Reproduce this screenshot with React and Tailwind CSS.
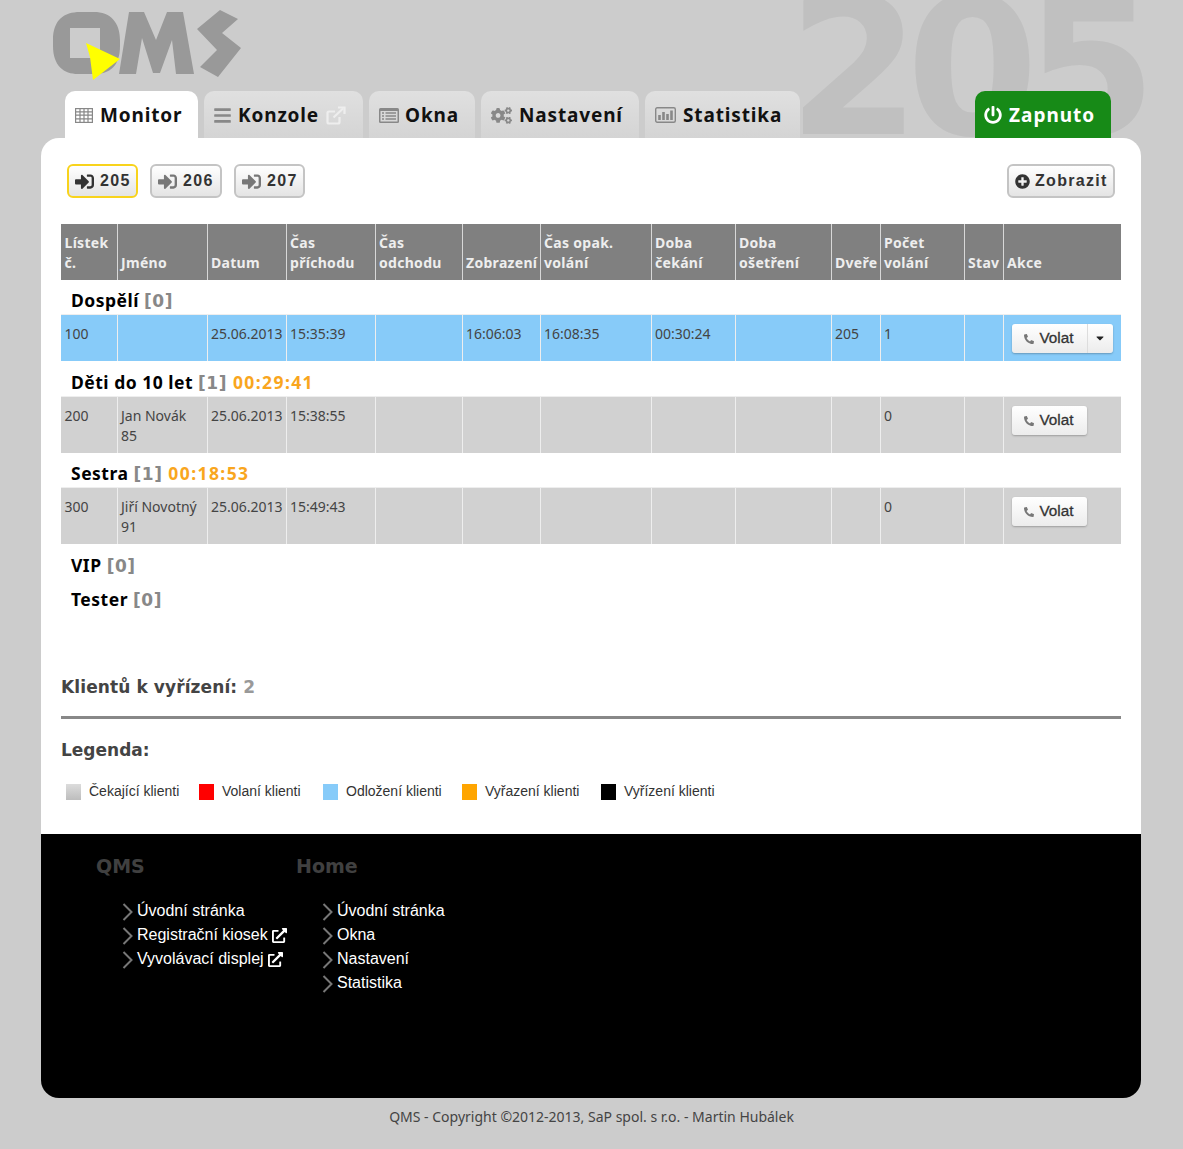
import React from "react";
import { FaBars, FaExternalLinkAlt, FaSignInAlt, FaPowerOff, FaPlusCircle, FaPhoneAlt, FaCaretDown, FaCogs } from "react-icons/fa";

const dj = "font-['DejaVu_Sans',sans-serif]";
const noto = "font-['Noto_Sans',sans-serif]";

function Logo() {
  return (
    <svg width="210" height="90" viewBox="0 0 210 90" className="absolute left-[40px] top-0">
      <path fillRule="evenodd" fill="#999" d="M13 40 C13 20 24 12 40 12 H54 C70 12 80 22 80 40 V46 C80 66 70 74 54 74 H38 C24 74 13 66 13 46 Z M30 28 V58 H60 V28 Z" />
      <polygon fill="#999" points="79,74 89,12 104,12 116,40 127,12 143,12 154,74 136,74 132,40 120,73 113,73 102,38 96,74" />
      <polygon fill="#999" points="180,10 198,19 182,33 201,48 178,77 160,67 177,50 157,29" />
      <polygon fill="#ffff00" points="46,43 80,59 53,80 50,57" />
    </svg>
  );
}

function GridIcon() {
  return (
    <svg width="18" height="15" viewBox="0 0 18 15" fill="none" stroke="#888" strokeWidth="1.2">
      <rect x="0.6" y="0.6" width="16.8" height="13.8" />
      <path d="M0.6 3.8 H17.4 M0.6 7.2 H17.4 M0.6 10.8 H17.4 M5 0.6 V14.4 M9 0.6 V14.4 M13 0.6 V14.4" />
    </svg>
  );
}

function ListIcon() {
  return (
    <svg width="20" height="15" viewBox="0 0 20 15">
      <rect width="20" height="15" rx="1.5" fill="#888" />
      <rect x="1.5" y="3" width="17" height="10.5" fill="#d8d8d8" />
      <path d="M3 5 H5 M6.5 5 H17 M3 8 H5 M6.5 8 H17 M3 11 H5 M6.5 11 H17" stroke="#888" strokeWidth="1.4" />
    </svg>
  );
}

function ChartIcon() {
  return (
    <svg width="21" height="16" viewBox="0 0 21 16">
      <rect x="0.7" y="0.7" width="19.6" height="14.6" rx="1.5" fill="none" stroke="#888" strokeWidth="1.4" />
      <path d="M4.5 13 V8 M8.5 13 V5 M12.5 13 V7 M16.5 13 V3.5" stroke="#888" strokeWidth="2.6" />
    </svg>
  );
}

function ExtOutline() {
  return (
    <svg width="20" height="19" viewBox="0 0 20 19" fill="none" stroke="#eeeeee" strokeWidth="2.2" className="ml-[1px]">
      <path d="M13.5 11 V16 A1.5 1.5 0 0 1 12 17.5 H3 A1.5 1.5 0 0 1 1.5 16 V7 A1.5 1.5 0 0 1 3 5.5 H9" />
      <path d="M7.5 11.5 L17 2.5" />
      <path d="M12 1.5 H18.5 V8" />
    </svg>
  );
}

function Tab({ icon, label, active, w, ext, gap = "gap-[7px]", pl = "pl-[10px]" }) {
  return (
    <div className={`flex h-[47px] items-center ${gap} ${pl} rounded-t-[10px] pt-[1px] ${w} ${active ? "bg-white" : "bg-gradient-to-b from-[#e0e0e0] to-[#d4d4d4]"}`}>
      <span className="text-[#888]">{icon}</span>
      <span className={`${noto} text-[19px] font-bold tracking-[0.85px] text-[#111]`}>{label}</span>
      {ext && <ExtOutline />}
    </div>
  );
}

function RoomBtn({ n, active, w = "w-[71px]" }) {
  return (
    <div className={`flex h-[34px] ${w} items-center gap-[6px] rounded-[6px] border-2 bg-gradient-to-b from-white to-[#e4e4e4] pl-[6px] font-['Liberation_Sans',sans-serif] text-[16px] font-bold tracking-[1.3px] text-[#333] ${active ? "border-[#f8d31c]" : "border-[#c4c4c4]"}`}>
      <FaSignInAlt className={`text-[19px] ${active ? "text-[#333]" : "text-[#777]"}`} />
      {n}
    </div>
  );
}

const widths = [56, 90, 79, 89, 87, 78, 111, 84, 96, 49, 84, 39, 118];
const headers = [["Lístek", "č."], ["", "Jméno"], ["", "Datum"], ["Čas", "příchodu"], ["Čas", "odchodu"], ["", "Zobrazení"], ["Čas opak.", "volání"], ["Doba", "čekání"], ["Doba", "ošetření"], ["", "Dveře"], ["Počet", "volání"], ["", "Stav"], ["", "Akce"]];

function Section({ name, count, time, h = "h-[34px]" }) {
  return (
    <tr className={h}>
      <td colSpan={13} className="align-bottom pb-[3px] pl-[10px] leading-[20px]">
        <span className={`${noto} text-[17.5px] font-bold tracking-[0.5px] text-black`}>{name} </span>
        <span className={`${dj} text-[17px] font-bold tracking-[0.5px] text-[#888]`}>[{count}]</span>
        {time && <span className={`${noto} text-[17.5px] font-bold tracking-[1.4px] text-[#f9a61e]`}> {time}</span>}
      </td>
    </tr>
  );
}

function VolatBtn({ drop }) {
  return (
    <div className="mx-[8px] mt-[9px] inline-flex h-[29px] rounded-[3px] bg-gradient-to-b from-white to-[#ececec] font-['Liberation_Sans',sans-serif] text-[15.3px] text-[#333] shadow-[0_1px_2px_rgba(0,0,0,0.25)]">
      <div className="flex w-[75px] items-center justify-center gap-[5px] pt-[1px]">
        <FaPhoneAlt className="text-[10px] text-[#777]" />
        <span className="font-normal [-webkit-text-stroke:0.3px_#333]">Volat</span>
      </div>
      {drop && (
        <div className="flex w-[26px] items-center justify-center border-l border-[#ddd]">
          <FaCaretDown className="text-[12px] text-[#222]" />
        </div>
      )}
    </div>
  );
}

function Row({ cells, bg, h, drop }) {
  return (
    <tr className={`${bg} ${h}`}>
      {cells.map((c, i) => (
        <td key={i} className={`${noto} border-r border-t border-[#eee] align-top pl-[3.5px] pt-[9px] text-[14px] leading-[20px] text-[#444]`}>
          {c}
        </td>
      ))}
      <td className="border-t border-[#eee] align-top p-0">
        <VolatBtn drop={drop} />
      </td>
    </tr>
  );
}

function Legend({ color, label, w }) {
  return (
    <div className={`flex items-center gap-[8px] ${w}`}>
      <span className={`h-[16px] w-[15px] ${color}`} />
      <span className="font-['Liberation_Sans',sans-serif] text-[14px] text-[#333]">{label}</span>
    </div>
  );
}

function FootLink({ label, ext }) {
  return (
    <li className="flex h-[24px] items-center">
      <svg width="15" height="18" viewBox="0 0 15 18" fill="none" stroke="#777" strokeWidth="2" className="mt-[2px]">
        <path d="M1.5 1 L9.5 9 L1.5 17" />
      </svg>
      <span>{label}</span>
      {ext && <FaExternalLinkAlt className="ml-[4px] text-[15px]" />}
    </li>
  );
}

function FootCol({ title, w, children }) {
  return (
    <div className={w}>
      <h3 className={`${dj} text-[19px] font-bold leading-[24px] text-[#404040]`}>{title}</h3>
      <ul className="mt-[21px] pl-[26px] font-['Liberation_Sans',sans-serif] text-[16px] text-white">{children}</ul>
    </div>
  );
}

export default function App() {
  return (
    <div className={`relative min-h-[1149px] overflow-hidden bg-[#cccccc] ${dj}`}>
      <Logo />
      <div className="absolute left-0 top-0 h-[138px] w-full overflow-hidden">
        <div className="absolute left-[788px] top-[-31px] font-['DejaVu_Sans',sans-serif] text-[190px] font-bold leading-[200px] tracking-[-14px] text-[#c0c0c0]">205</div>
      </div>

      <div className="relative flex h-[138px] items-end pl-[65px]">
        <div className="flex gap-[6px]">
          <Tab active w="w-[133px]" label="Monitor" icon={<GridIcon />} />
          <Tab w="w-[159px]" label="Konzole" pl="pl-[9px]" gap="gap-[6px]" ext icon={<FaBars className="text-[19px]" />} />
          <Tab w="w-[106px]" label="Okna" gap="gap-[6px]" icon={<ListIcon />} />
          <Tab w="w-[158px]" label="Nastavení" icon={<FaCogs className="text-[21px]" />} />
          <Tab w="w-[155px]" label="Statistika" icon={<ChartIcon />} />
        </div>
        <div className="ml-[175px] flex h-[47px] w-[136px] items-center gap-[7px] rounded-t-[10px] bg-[#178a17] pl-[9px] pt-[1px] text-white">
          <FaPowerOff className="text-[18px]" />
          <span className={`${noto} text-[19px] font-bold tracking-[1px]`}>Zapnuto</span>
        </div>
      </div>

      <main className="relative ml-[41px] h-[696px] w-[1100px] rounded-t-[18px] bg-white px-[20px] pt-[26px]">
        <div className="flex items-center justify-between pl-[6px] pr-[6px]">
          <div className="flex gap-[12px]">
            <RoomBtn n="205" active />
            <RoomBtn n="206" w="w-[72px]" />
            <RoomBtn n="207" />
          </div>
          <div className="flex h-[34px] w-[108px] items-center gap-[5px] rounded-[6px] border-2 border-[#c4c4c4] bg-gradient-to-b from-white to-[#e4e4e4] pl-[6px] font-['Liberation_Sans',sans-serif] text-[16px] font-bold tracking-[1.3px] text-[#333]">
            <FaPlusCircle className="text-[15px]" />
            Zobrazit
          </div>
        </div>

        <table className={`mt-[26px] w-[1060px] table-fixed border-collapse ${noto}`}>
          <colgroup>
            {widths.map((w, i) => <col key={i} style={{ width: w }} />)}
          </colgroup>
          <thead>
            <tr className="h-[56px] bg-[#808080]">
              {headers.map((h, i) => (
                <th key={i} className="border-r border-[#d8d8d8] last:border-r-0 pl-[3.5px] pb-[7px] align-bottom text-left text-[14px] font-bold leading-[20px] tracking-[0.3px] text-[#eee]">
                  {h[0] && <div className="whitespace-nowrap">{h[0]}</div>}
                  <div className="whitespace-nowrap">{h[1]}</div>
                </th>
              ))}
            </tr>
          </thead>
          <tbody>
            <Section name="Dospělí" count="0" />
            <Row bg="bg-[#87cbf9]" h="h-[47px]" drop cells={["100", "", "25.06.2013", "15:35:39", "", "16:06:03", "16:08:35", "00:30:24", "", "205", "1", ""]} />
            <Section name="Děti do 10 let" count="1" time="00:29:41" h="h-[35px]" />
            <Row bg="bg-[#d1d1d1]" h="h-[57px]" cells={["200", <>Jan Novák<br />85</>, "25.06.2013", "15:38:55", "", "", "", "", "", "", "0", ""]} />
            <Section name="Sestra" count="1" time="00:18:53" />
            <Row bg="bg-[#d1d1d1]" h="h-[57px]" cells={["300", <>Jiří Novotný<br />91</>, "25.06.2013", "15:49:43", "", "", "", "", "", "", "0", ""]} />
            <Section name="VIP" count="0" h="h-[35px]" />
            <Section name="Tester" count="0" />
          </tbody>
        </table>

        <p className={`${dj} mt-[63px] text-[17px] font-bold leading-[22px] tracking-[0.1px] text-[#444]`}>
          Klientů k vyřízení: <span className="text-[#999]">2</span>
        </p>
        <div className="mt-[18px] h-[3px] w-[1060px] bg-[#888]" />
        <p className={`${dj} mt-[20px] text-[17px] font-bold leading-[22px] text-[#444]`}>Legenda:</p>
        <div className="mt-[20px] flex pl-[5px]">
          <Legend w="w-[133px]" color="bg-gradient-to-b from-[#dcdcdc] to-[#bdbdbd]" label="Čekající klienti" />
          <Legend w="w-[124px]" color="bg-[#ff0000]" label="Volaní klienti" />
          <Legend w="w-[139px]" color="bg-[#87cbf9]" label="Odložení klienti" />
          <Legend w="w-[139px]" color="bg-[#ffa500]" label="Vyřazení klienti" />
          <Legend w="w-[125px]" color="bg-black" label="Vyřízení klienti" />
        </div>
      </main>

      <footer className="ml-[41px] flex h-[264px] w-[1100px] rounded-b-[18px] bg-black pl-[55px] pt-[20px]">
        <FootCol title="QMS" w="w-[200px]">
          <FootLink label="Úvodní stránka" />
          <FootLink label="Registrační kiosek" ext />
          <FootLink label="Vyvolávací displej" ext />
        </FootCol>
        <FootCol title="Home" w="w-[200px]">
          <FootLink label="Úvodní stránka" />
          <FootLink label="Okna" />
          <FootLink label="Nastavení" />
          <FootLink label="Statistika" />
        </FootCol>
      </footer>
      <p className={`${noto} pt-[10px] text-center text-[14px] leading-[18px] text-[#444]`}>QMS - Copyright ©2012-2013, SaP spol. s r.o. - Martin Hubálek</p>
    </div>
  );
}
